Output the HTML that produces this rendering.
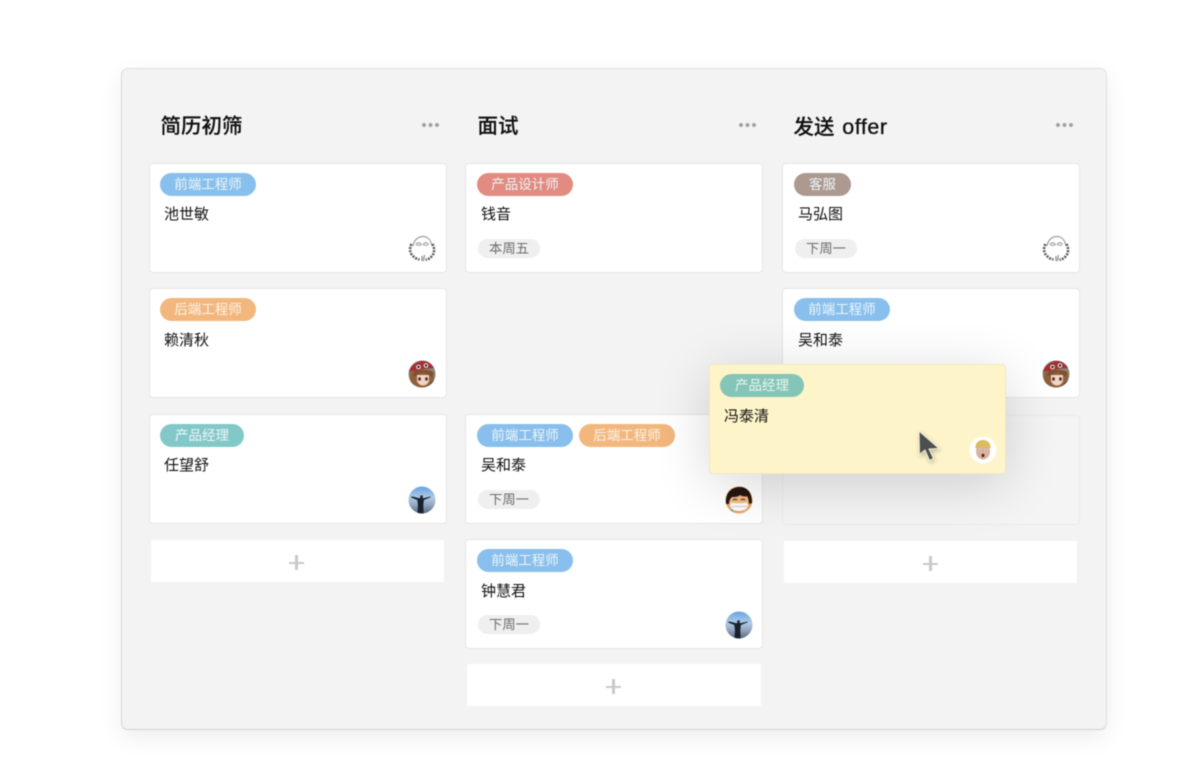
<!DOCTYPE html>
<html lang="zh">
<head>
<meta charset="utf-8">
<title>看板</title>
<style>
html,body{margin:0;padding:0;background:#fff}
#stage{position:relative;width:1200px;height:783px;overflow:hidden;background:#fff;font-family:"Liberation Sans","Noto Sans CJK SC",sans-serif;filter:blur(.45px)}
#stage div,#stage svg{position:absolute;box-sizing:border-box}
.panel{left:121px;top:68px;width:986px;height:662px;background:#f3f3f3;border:1px solid #e0e0e0;border-bottom-color:#cfcfcf;border-left-color:#d8d8d8;border-radius:7px;box-shadow:0 8px 24px rgba(0,0,0,.07)}
.title{top:113px;height:28px;line-height:28px;font-size:20.5px;font-weight:500;color:#0e0e0e;white-space:nowrap;-webkit-text-stroke:.15px #0e0e0e}
.title span{font-size:21.5px;letter-spacing:.55px;margin-left:2px;-webkit-text-stroke:.3px #0e0e0e}
.dots{top:123px;width:17px;height:4px;background:radial-gradient(circle at 2px 2px,#a0a0a0 1.8px,transparent 2.1px) 0 0/6.5px 4px repeat-x}
.card{width:298px;height:110px;background:#fff;border:1px solid #e6e6e6;border-radius:4px}
.tag{height:23px;line-height:23px;border-radius:12px;color:#eef6fb;font-size:13.5px;text-align:center;white-space:nowrap}
.blue{background:#88bfec;width:96px}
.orange{background:#f2b77d;width:96px;color:#fdf3e8}
.teal{background:#83c8c9;width:84px}
.green{background:#85c5b8;width:84px}
.red{background:#e28b81;width:96px}
.brown{background:#ac9990;width:57px}
.name{height:22px;line-height:22px;font-size:15px;color:#111;white-space:nowrap;margin-top:1px}
.date{width:62px;height:19px;line-height:19px;border-radius:10px;background:#efefef;color:#6c6c6c;font-size:13.3px;text-align:center;white-space:nowrap}
.add{height:42px;background:#fff}
.h{width:15px;height:2.5px;background:#c9c9c9}
.v{width:2.5px;height:15px;background:#c9c9c9}
</style>
</head>
<body>
<div id="stage">
<div class="panel"></div>

<div class="title" style="left:160.500px">简历初筛</div>
<div class="title" style="left:477.500px">面试</div>
<div class="title" style="left:793.500px">发送 <span>offer</span></div>
<div class="dots" style="left:422px"></div>
<div class="dots" style="left:739px"></div>
<div class="dots" style="left:1056px"></div>

<!-- column 1 -->
<div class="card" style="left:148.500px;top:162.500px"></div>
<div class="tag blue" style="left:160px;top:173px">前端工程师</div>
<div class="name" style="left:164px;top:203px">池世敏</div>

<div class="card" style="left:148.500px;top:287.500px"></div>
<div class="tag orange" style="left:160px;top:298px">后端工程师</div>
<div class="name" style="left:164px;top:329px">赖清秋</div>

<div class="card" style="left:148.500px;top:413.500px"></div>
<div class="tag teal" style="left:160px;top:424px">产品经理</div>
<div class="name" style="left:164px;top:454px">任望舒</div>

<div class="add" style="left:151px;top:540px;width:293px"></div>
<div class="h" style="left:289px;top:561.500px"></div>
<div class="v" style="left:295.250px;top:555px"></div>

<!-- column 2 -->
<div class="card" style="left:465px;top:162.500px"></div>
<div class="tag red" style="left:477px;top:173px">产品设计师</div>
<div class="name" style="left:481px;top:203px">钱音</div>
<div class="date" style="left:478px;top:239px">本周五</div>

<div class="card" style="left:465px;top:413.500px"></div>
<div class="tag blue" style="left:477px;top:424px">前端工程师</div>
<div class="tag orange" style="left:579px;top:424px">后端工程师</div>
<div class="name" style="left:481px;top:454px">吴和泰</div>
<div class="date" style="left:478px;top:490px">下周一</div>

<div class="card" style="left:465px;top:539px"></div>
<div class="tag blue" style="left:477px;top:549px">前端工程师</div>
<div class="name" style="left:481px;top:580px">钟慧君</div>
<div class="date" style="left:478px;top:615px">下周一</div>

<div class="add" style="left:467px;top:664px;width:294px"></div>
<div class="h" style="left:606px;top:685.500px"></div>
<div class="v" style="left:612.250px;top:679px"></div>

<!-- column 3 -->
<div class="card" style="left:781.500px;top:162.500px"></div>
<div class="tag brown" style="left:794px;top:173px">客服</div>
<div class="name" style="left:798px;top:203px">马弘图</div>
<div class="date" style="left:795px;top:239px">下周一</div>

<div class="card" style="left:781.500px;top:287.500px"></div>
<div class="tag blue" style="left:794px;top:298px">前端工程师</div>
<div class="name" style="left:798px;top:329px">吴和泰</div>

<div style="left:781.500px;top:415px;width:298px;height:110px;background:#f4f4f4;border:1px solid #ebebeb;border-radius:4px"></div>

<div class="add" style="left:784px;top:541px;width:293px"></div>
<div class="h" style="left:923px;top:562.500px"></div>
<div class="v" style="left:929.250px;top:556px"></div>

<!-- symbol library -->
<svg width="0" height="0" style="left:0;top:0">
<defs>
<symbol id="sk" viewBox="0 0 28 28">
<circle cx="14" cy="14" r="13.500" fill="#fff"/>
<path d="M5 11C6 5 10 1.500 15 1.500c5 0 8 4 9 9.500" fill="none" stroke="#8a8a8a" stroke-width="1"/>
<path d="M8 9c2-2 4-2 5.500 .5-2 1.500-4.500 1.300-5.500-.5zM15 9.500c1.500-2.500 3.500-2.500 5.500-.5-1 2-3.500 2.200-5.500 .5z" fill="#e6e6e6" stroke="#9a9a9a" stroke-width=".8"/>
<path d="M3.500 9c-2.500 4.500-1.500 9.500 1.500 12 1.500 2 4 3 6.500 3.500M24.500 9c2.500 4.500 2 9.500-1 12.500-1.500 2-3.500 2.800-6 3.300" fill="none" stroke="#5a5a5a" stroke-width="2.600" stroke-dasharray="2 1.200"/>
<path d="M14 21v5M16.500 20l-1.200 6" stroke="#777" stroke-width="1"/>
</symbol>
<symbol id="hat" viewBox="0 0 28 28">
<clipPath id="hc"><circle cx="14" cy="14" r="13.500"/></clipPath>
<g clip-path="url(#hc)">
<rect width="28" height="28" fill="#8b8378"/>
<path d="M2 13c4-4 20-5 24 0v9l-4 6H7l-5-6z" fill="#8f6138"/>
<path d="M9 15h12v6c-1 3-3.500 4.500-6 4.500s-5-1.500-6-4.500z" fill="#f0d4c4"/>
<path d="M5 16c4 .500 7-3.500 10-3.500 3 0 5 3 9 4l1-5L7 9z" fill="#7e5130"/>
<ellipse cx="11.500" cy="19" rx="1.400" ry="1.700" fill="#5e2733"/><ellipse cx="18.500" cy="19" rx="1.400" ry="1.700" fill="#5e2733"/>
<path d="M1 12C3 5 9 1 15 1c5 0 9 2 12 7-6 0-19 2-26 4z" fill="#a52f34"/>
<circle cx="10.500" cy="7" r="2.300" fill="#eee"/><circle cx="18" cy="5.500" r="2.300" fill="#eee"/>
<circle cx="10.500" cy="7" r="1.200" fill="#1a1a1a"/><circle cx="18" cy="5.500" r="1.200" fill="#1a1a1a"/>
<path d="M1 20l9 8H0z" fill="#22365a"/><path d="M18 28l8-8 2 8z" fill="#22365a"/>
</g>
</symbol>
<symbol id="sil" viewBox="0 0 28 28">
<linearGradient id="sg" x1="0" y1="0" x2="0" y2="1"><stop offset="0" stop-color="#63a3e6"/><stop offset=".42" stop-color="#b0cbe4"/><stop offset=".68" stop-color="#93a6bd"/><stop offset="1" stop-color="#56677e"/></linearGradient>
<clipPath id="sc"><circle cx="14" cy="14" r="13.500"/></clipPath>
<g clip-path="url(#sc)">
<rect width="28" height="28" fill="url(#sg)"/>
<path d="M4.500 10.500l7 1.800.9-.8-.3-2h2.800l-.3 2 .9.800 7-1.800.2.700-6.800 2.800-.6 5 .4 9h-6.200l.4-9-.6-5-6.800-2.800z" fill="#18222f"/>
</g>
</symbol>
</defs>
</svg>

<!-- avatars: sketch -->
<svg style="left:408px;top:235px" width="28" height="28" viewBox="0 0 28 28"><use href="#sk"/></svg>
<svg style="left:1042px;top:235px" width="28" height="28" viewBox="0 0 28 28"><use href="#sk"/></svg>
<!-- avatars: red hat -->
<svg style="left:408px;top:360px" width="28" height="28" viewBox="0 0 28 28"><use href="#hat"/></svg>
<svg style="left:1042px;top:360px" width="28" height="28" viewBox="0 0 28 28"><use href="#hat"/></svg>
<!-- avatars: silhouette -->
<svg style="left:408px;top:486px" width="28" height="28" viewBox="0 0 28 28"><use href="#sil"/></svg>
<svg style="left:725px;top:611px" width="28" height="28" viewBox="0 0 28 28"><use href="#sil"/></svg>
<!-- avatar: mask -->
<svg style="left:725px;top:486px" width="28" height="28" viewBox="0 0 28 28">
<defs><clipPath id="c"><circle cx="14" cy="14" r="13.500"/></clipPath></defs>
<g clip-path="url(#c)">
<rect width="28" height="28" fill="#e9a368"/>
<path d="M5 12c4-2 14-2 18 0l1 7-3 6H7l-3-6z" fill="#f2bb86"/>
<path d="M1 18C0 5 8 1 15 1s12 5 12 16l-3 1c0-3-1-7-2-8-3 1-5 0-7-1-2 2-5 2-8 2-2 2-3 4-3 7z" fill="#241710"/>
<path d="M8 14c1-1 3-1 4 0M16 14c1-1 3-1 4 0" fill="none" stroke="#33241a" stroke-width="1"/>
<path d="M6 16.500c4 1 12 1 16 0l1 3.500c-1 3-5 5-9 5s-8-2-9-5z" fill="#fcfcfb"/>
<path d="M6 20.500h16" stroke="#bbb" stroke-width=".8"/>
<path d="M3 26l4-3 3 5H3z" fill="#5fa8a8"/>
</g></svg>

<!-- floating dragged card -->
<div style="left:708.500px;top:364px;width:297.500px;height:110px;background:#fef4c9;border:1px solid #f1e8c0;border-radius:4px;box-shadow:0 10px 55px rgba(0,0,0,.16)"></div>
<div class="tag green" style="left:720px;top:374px;color:#e9f6ef">产品经理</div>
<div class="name" style="left:724px;top:405px">冯泰清</div>
<svg style="left:969px;top:436px" width="28" height="28" viewBox="0 0 28 28">
<circle cx="14" cy="14" r="13.500" fill="#fff"/>
<path d="M6.500 12c0-5.500 3-8 7.500-8s7.500 2.500 7.500 8z" fill="#dcbd57"/>
<ellipse cx="14" cy="15.500" rx="7" ry="8" fill="#d9b29c"/>
<path d="M6.500 12.500c2.500-1.500 12.500-1.500 15 0l.2-2.500c-3.500-1.500-12-1.500-15.400 0z" fill="#dcbd57"/>
<circle cx="11" cy="14.500" r="1.200" fill="#fff"/><circle cx="17" cy="14.500" r="1.200" fill="#fff"/>
<circle cx="11" cy="14.500" r=".6" fill="#333"/><circle cx="17" cy="14.500" r=".6" fill="#333"/>
<ellipse cx="14" cy="19.500" rx="1.400" ry="1.700" fill="#4a2622"/>
</svg>

<!-- cursor -->
<svg style="left:912px;top:426px;overflow:visible" width="32" height="40" viewBox="0 0 32 40">
<path d="M7 5 L7.500 28.500 L13 24 L17.500 34.500 L21.500 32.500 L17 23 L27 22.500 Z" fill="#4b4f4d" stroke="#f6f2de" stroke-width="1" stroke-linejoin="round" style="filter:drop-shadow(1px 2px 2px rgba(0,0,0,.25))"/>
</svg>
</div>
</body>
</html>
